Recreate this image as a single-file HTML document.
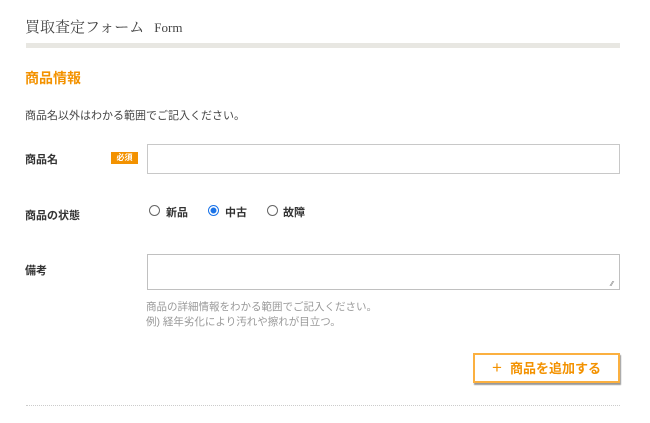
<!DOCTYPE html>
<html><head><meta charset="utf-8"><style>
body{margin:0;width:650px;height:423px;background:#fff;position:relative;font-family:"Liberation Sans","Noto Sans CJK JP",sans-serif;color:#333;overflow:hidden}
.a{position:absolute;white-space:nowrap}
.lbl{font-size:11px;font-weight:bold;color:#333}
.radio{width:11px;height:11px;border:1px solid #666;border-radius:50%;box-sizing:border-box;display:inline-block;position:absolute}
</style></head><body>
<div class="a" style="left:25px;top:16px;font-family:'Liberation Serif','Noto Serif CJK SC',serif;font-size:15px;color:#444">買取査定フォーム<span style="font-size:13px;margin-left:10px">Form</span></div>
<div class="a" style="left:26px;top:43px;width:594px;height:5px;background:#e8e7e2"></div>
<div class="a" style="left:25px;top:68px;font-size:14px;font-weight:bold;color:#f39200">商品情報</div>
<div class="a" style="left:25px;top:107px;font-size:11px;color:#444">商品名以外はわかる範囲でご記入ください。</div>
<div class="a lbl" style="left:25px;top:151px">商品名</div>
<div class="a" style="left:111px;top:152px;width:27px;height:12px;background:#f39200;color:#fff;font-size:8px;font-weight:bold;text-align:center;line-height:12px">必須</div>
<div class="a" style="left:147px;top:144px;width:473px;height:30px;border:1px solid #c8c8c8;box-sizing:border-box"></div>
<div class="a lbl" style="left:25px;top:207px">商品の状態</div>
<div class="radio" style="left:149px;top:205px"></div>
<div class="a lbl" style="left:166px;top:204px">新品</div>
<div class="radio" style="left:208px;top:205px;border:1px solid #1a73e8;background:radial-gradient(circle,#1a73e8 0 2.7px,#fff 3.2px)"></div>
<div class="a lbl" style="left:225px;top:204px">中古</div>
<div class="radio" style="left:267px;top:205px"></div>
<div class="a lbl" style="left:283px;top:204px">故障</div>
<div class="a lbl" style="left:25px;top:262px">備考</div>
<div class="a" style="left:147px;top:254px;width:473px;height:36px;border:1px solid #c0c0c0;box-sizing:border-box"></div>
<div class="a" style="left:611px;top:281px;font-size:7px;color:#666">⁄⁄</div>
<div class="a" style="left:146px;top:300px;font-size:10.5px;color:#999;line-height:15px">商品の詳細情報をわかる範囲でご記入ください。<br>例) 経年劣化により汚れや擦れが目立つ。</div>
<div class="a" style="left:473px;top:353px;width:147px;height:30px;border:2px solid #fbb040;box-sizing:border-box;box-shadow:1px 2px 1px #999;background:#fff;color:#f39200;font-size:13px;font-weight:bold;text-align:center;line-height:26px"><span style="font-weight:normal;font-size:17px;margin-right:8px">+</span>商品を追加する</div>
<div class="a" style="left:26px;top:405px;width:594px;border-top:1px dotted #ccc"></div>
</body></html>
